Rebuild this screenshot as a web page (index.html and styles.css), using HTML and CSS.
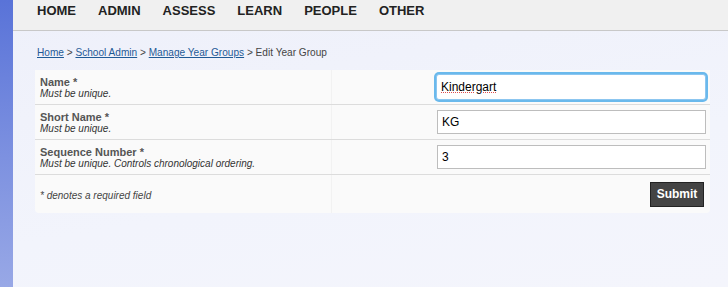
FILE: index.html
```html
<!DOCTYPE html>
<html lang="en">
<head>
  <meta charset="UTF-8" />
  <title>Edit Year Group</title>
  <link rel="stylesheet" href="styles.css">
</head>
<body>
  <div class="side-strip"></div>
  <div class="page">
    <header>
      <nav>
        <a href="#">HOME</a>
        <a href="#">ADMIN</a>
        <a href="#">ASSESS</a>
        <a href="#">LEARN</a>
        <a href="#">PEOPLE</a>
        <a href="#">OTHER</a>
      </nav>
    </header>

    <main>
      <div class="breadcrumb">
        <a href="#">Home</a> &gt; <a href="#">School Admin</a> &gt; <a href="#">Manage Year Groups</a> &gt; Edit Year Group
      </div>

      <form class="form-table">
        <div class="row">
          <div class="label">
            <strong>Name *</strong>
            <em>Must be unique.</em>
          </div>
          <div class="field">
            <input type="text" class="focused" value="Kindergart" spellcheck="false">
          </div>
        </div>
        <div class="row">
          <div class="label">
            <strong>Short Name *</strong>
            <em>Must be unique.</em>
          </div>
          <div class="field">
            <input type="text" value="KG">
          </div>
        </div>
        <div class="row">
          <div class="label">
            <strong>Sequence Number *</strong>
            <em>Must be unique. Controls chronological ordering.</em>
          </div>
          <div class="field">
            <input type="text" value="3">
          </div>
        </div>
        <div class="row last">
          <div class="label">
            <em class="note">* denotes a required field</em>
          </div>
          <div class="field">
            <button type="button">Submit</button>
          </div>
        </div>
      </form>
    </main>
  </div>
</body>
</html>
```

FILE: styles.css
```css
* {
  margin: 0;
  padding: 0;
  box-sizing: border-box;
}

html, body {
  height: 100%;
}

body {
  display: flex;
  font-family: 'Liberation Sans', Arial, sans-serif;
  background: linear-gradient(170deg, #eef0fa 0%, #f2f4fc 60%, #f4f5fc 100%);
  color: #444;
  overflow: hidden;
}

.side-strip {
  width: 13px;
  flex: none;
  background: linear-gradient(180deg, #5973d8 0%, #7d91e0 55%, #98a8e6 100%);
}

.page {
  flex: 1;
}

header {
  height: 31px;
  background-color: #f0f0f0;
  border-bottom: 1px solid #c8c8c8;
  padding-left: 24px;
}

nav {
  display: flex;
  gap: 22px;
  padding-top: 2px;
}

nav a {
  color: #222;
  text-decoration: none;
  font-weight: bold;
  font-size: 13px;
  line-height: 18px;
}

main {
  padding: 15px 18px 0 22px;
}

.breadcrumb {
  font-size: 10.1px;
  color: #444;
  line-height: 14px;
  margin-bottom: 10px;
  padding-left: 2px;
}

.breadcrumb a {
  color: #1f5a96;
}

.form-table {
  width: 675px;
  background-color: #fafafa;
  border-radius: 0 0 4px 4px;
}

.row {
  display: grid;
  grid-template-columns: 297px 1fr;
  height: 35px;
  border-bottom: 1px solid #dcdcdc;
}

.row.last {
  height: 38px;
  border-bottom: none;
}

.label {
  display: flex;
  flex-direction: column;
  justify-content: center;
  padding-left: 5px;
  border-right: 1px solid #f2f2f2;
}

.label strong {
  font-size: 11px;
  color: #555;
  line-height: 12px;
}

.label em {
  font-size: 10px;
  color: #333;
  line-height: 11px;
}

.label em.note {
  color: #444;
  margin-top: 2px;
}

.field {
  display: flex;
  align-items: center;
  justify-content: flex-end;
  padding-right: 4px;
}

input {
  width: 269px;
  height: 24px;
  border: 1px solid #bdbdbd;
  background: #fff;
  font-family: 'Liberation Sans', Arial, sans-serif;
  font-size: 12px;
  color: #000;
  padding: 0 4px;
  outline: none;
}

input.focused {
  width: 270px;
  height: 26px;
  border: 1px solid #8cc6f0;
  box-shadow: 0 0 0 2px #6ab9ec;
  border-radius: 3px;
  text-decoration: underline dotted #e05050;
  text-decoration-thickness: 1px;
}

button {
  background-color: #444;
  color: #fff;
  border: 1px solid #222;
  font-family: 'Liberation Sans', Arial, sans-serif;
  font-weight: bold;
  font-size: 12px;
  height: 25px;
  width: 54px;
  margin-right: 2px;
}
```
